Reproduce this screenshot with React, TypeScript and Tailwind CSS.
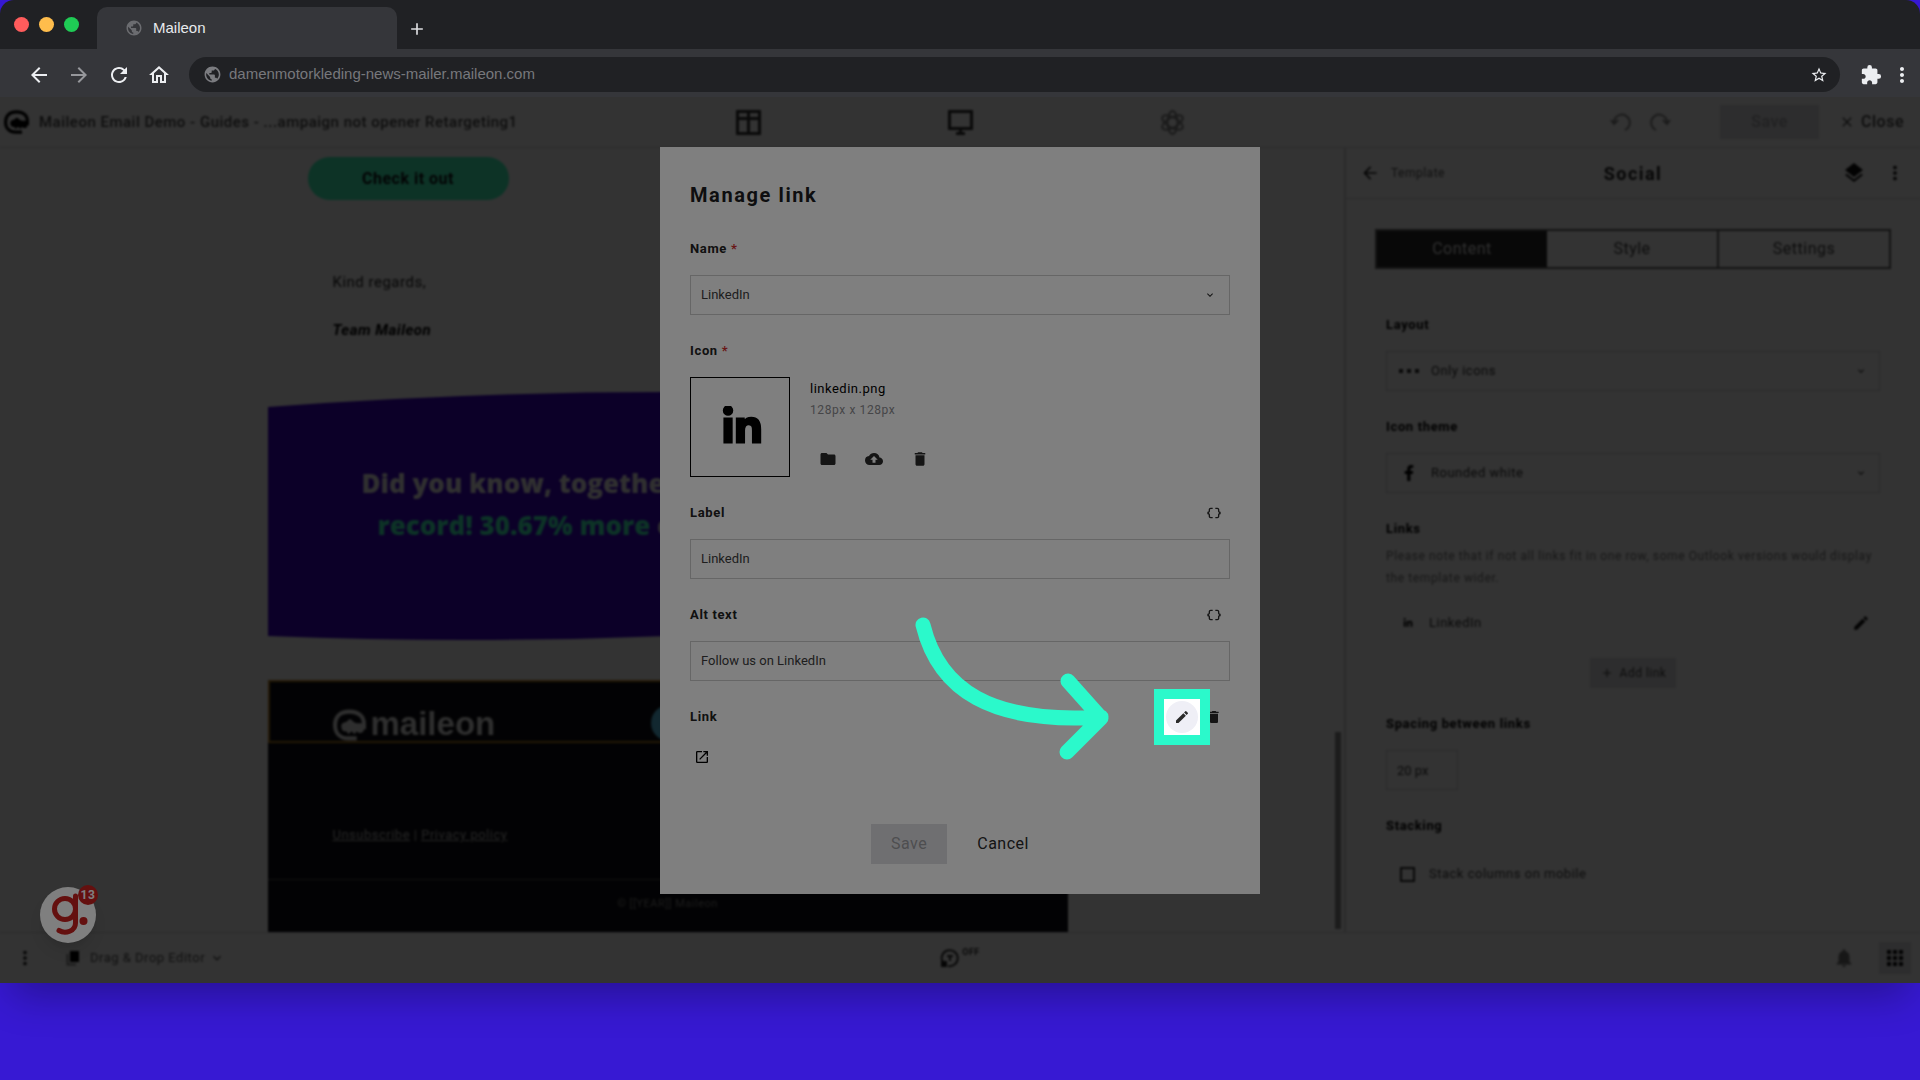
import type { ReactNode } from "react";
import { FaFacebookF, FaLinkedinIn } from "react-icons/fa";
import {
  MdAdd,
  MdApps,
  MdArrowBack,
  MdArrowForward,
  MdClose,
  MdCloudUpload,
  MdDataObject,
  MdDelete,
  MdEdit,
  MdExtension,
  MdFolder,
  MdKeyboardArrowDown,
  MdLayers,
  MdMoreVert,
  MdNotifications,
  MdOpenInNew,
  MdOutlineHome,
  MdPublic,
  MdRefresh,
  MdStarBorder,
} from "react-icons/md";

const AtLogo = ({ className }: { className: string }) => (
  <svg viewBox="0 0 32 30" className={className} fill="none" aria-hidden="true">
    <path d="M23 28H15C7 28 2 23 2 15S7 2 16 2s14 5 14 12v5" stroke="currentColor" strokeWidth="4" />
    <path
      d="M8 16c0-4 4-3 6-5s3-2 5 0 4 3 11 2v6c0 4-5 5-7 2l-2 3-3-3-3 3-2-3c-3 1-5-1-5-5z"
      fill="currentColor"
    />
  </svg>
);

const BrowserChrome = () => (
  <header className="bg-[#202124] font-['Liberation_Sans',sans-serif]">
    <div className="flex h-[49px] items-end">
      <div className="flex h-full w-[97px] items-center gap-2.5 pl-[14px]">
        <span className="h-[15px] w-[15px] rounded-full bg-[#ff5c5c]"></span>
        <span className="h-[15px] w-[15px] rounded-full bg-[#ffbd4c]"></span>
        <span className="h-[15px] w-[15px] rounded-full bg-[#1fcb55]"></span>
      </div>
      <div className="flex h-[42px] w-[300px] items-center gap-2.5 rounded-t-[10px] bg-[#35363a] pl-7 text-[15px] text-[#e8eaed]">
        <MdPublic className="h-[18px] w-[18px] text-[#6b6c70]" />
        Maileon
      </div>
      <button aria-label="New tab" className="flex h-10 w-10 items-center justify-center text-[#dcdde0]">
        <MdAdd className="h-5 w-5" />
      </button>
    </div>
    <div className="flex h-12 items-center bg-[#35363a] pt-[3px] text-[#eceef1]">
      <nav className="flex items-center gap-4 pl-[27px]">
        <button aria-label="Back"><MdArrowBack className="h-6 w-6" /></button>
        <button aria-label="Forward" className="text-[#96979b]"><MdArrowForward className="h-6 w-6" /></button>
        <button aria-label="Reload"><MdRefresh className="h-6 w-6" /></button>
        <button aria-label="Home"><MdOutlineHome className="h-6 w-6" /></button>
      </nav>
      <div className="ml-[18px] flex h-[35px] flex-1 items-center gap-[7px] rounded-full bg-[#202124] pl-3.5 pr-3">
        <MdPublic className="h-[19px] w-[19px] text-[#7b7c80]" />
        <input
          aria-label="Address"
          className="flex-1 bg-transparent text-[15px] text-[#77787c] outline-none"
          defaultValue="damenmotorkleding-news-mailer.maileon.com"
        />
        <button aria-label="Bookmark"><MdStarBorder className="h-[18px] w-[18px]" /></button>
      </div>
      <button aria-label="Extensions" className="ml-5"><MdExtension className="h-[22px] w-[22px]" /></button>
      <button aria-label="Menu" className="ml-2 mr-1.5"><MdMoreVert className="h-6 w-6" /></button>
    </div>
  </header>
);

const EditorHeader = () => (
  <div className="grid h-[51px] grid-cols-[1fr_auto_1fr] items-center border-b border-[#d8d8dc]">
    <div className="flex items-center gap-2.5 pl-1 text-[15px] font-medium text-[#484848]">
      <AtLogo className="h-6 w-[25px] text-black" />
      Maileon Email Demo - Guides - ...ampaign not opener Retargeting1
    </div>
    <div className="flex text-[#333]">
      <button aria-label="Layout" className="flex w-[212px] justify-center">
        <svg viewBox="0 0 25 25" className="h-[25px] w-[25px]" fill="none" stroke="currentColor" strokeWidth="3">
          <path d="M1.500 1.500h22v22h-22zM1.500 8.500h22M12.500 1.500v22" />
        </svg>
      </button>
      <button aria-label="Desktop preview" className="flex w-[212px] justify-center">
        <svg viewBox="0 0 25 25" className="h-[25px] w-[25px]">
          <path d="M1.500 1.500h22v17h-22z" fill="none" stroke="currentColor" strokeWidth="3" />
          <path d="M11 19h3v3h3v3H8v-3h3z" fill="currentColor" />
        </svg>
      </button>
      <button aria-label="Effects" className="flex w-[212px] justify-center text-[#888]">
        <svg viewBox="0 0 25 25" className="h-[25px] w-[25px]" fill="none" stroke="currentColor" strokeWidth="2">
          <ellipse cx="12.500" cy="12.500" rx="5" ry="11.500" />
          <ellipse cx="12.500" cy="12.500" rx="5" ry="11.500" transform="rotate(60 12.500 12.500)" />
          <ellipse cx="12.500" cy="12.500" rx="5" ry="11.500" transform="rotate(120 12.500 12.500)" />
        </svg>
      </button>
    </div>
    <div className="flex items-center justify-end pr-4 text-[16px] font-medium">
      <button aria-label="Undo" className="mr-[17px] text-[#8a8a8a]">
        <svg viewBox="0 0 22 20" className="h-5 w-[22px]" fill="none" stroke="currentColor" strokeWidth="2">
          <path d="M4 12a8 8 0 1 1 11 6M1 8l3 4 4-4" />
        </svg>
      </button>
      <button aria-label="Redo" className="mr-[49px] text-[#8a8a8a]">
        <svg viewBox="0 0 22 20" className="h-5 w-[22px]" fill="none" stroke="currentColor" strokeWidth="2">
          <path d="M18 12a8 8 0 1 0-11 6M21 8l-3 4-4-4" />
        </svg>
      </button>
      <button className="mr-5 h-[34px] w-[99px] bg-[#e2e2e6] text-[#a5a5aa]">Save</button>
      <button className="flex items-center gap-1.5 text-[#484848]">
        <MdClose className="h-4 w-4" />
        Close
      </button>
    </div>
  </div>
);

const EmailCanvas = () => (
  <main className="flex min-w-0 flex-1">
    <div className="flex flex-1 justify-center">
      <div className="flex w-[800px] flex-col">
        <div className="flex flex-col pl-10 pt-[9px]">
          <button className="h-[43px] w-[201px] rounded-full bg-[#41ffc0] text-[16px] font-bold text-[#101014]">
            Check it out
          </button>
        </div>
        <div className="flex flex-col gap-6 pb-[50px] pl-[65px] pt-[70px] text-[15px] leading-6 text-[#222]">
          <p>Kind regards,</p>
          <p className="font-bold italic text-black">Team Maileon</p>
        </div>
        <div className="relative h-[248px]">
          <svg viewBox="0 0 800 248" preserveAspectRatio="none" className="absolute inset-0 h-full w-full">
            <path d="M0 15Q200 0 400 0T800 15V240Q600 236 400 244Q200 252 0 244z" fill="#3d00c8" />
          </svg>
          <p className="relative pl-[94px] pt-[70px] font-['Open_Sans',sans-serif] text-[26px] font-extrabold leading-[42px] tracking-normal text-[#f0f0f0]">
            Did you know, together
            <br />
            <span className="ml-4 text-[#41ffc0]">record! 30.67% more</span> o
          </p>
        </div>
        <div className="mt-10 flex flex-1 flex-col bg-[#0d0d14] text-[#bbb]">
          <div className="flex h-[63px] items-end gap-[5px] border-2 border-[#b07c20] pl-[63px]">
            <AtLogo className="h-8 w-[33px] text-[#e8e8e8]" />
            <span className="font-['Liberation_Sans',sans-serif] text-[33px] font-bold leading-[34px] tracking-normal text-[#e8e8e8]">
              maileon
            </span>
            <span className="ml-[151px] h-9 w-9 rounded-full bg-[#5ac8f0]"></span>
          </div>
          <p className="border-b border-[#55555c] pb-8 pl-[65px] pt-20 text-[13px] leading-6">
            <a href="#" className="underline">Unsubscribe</a> | <a href="#" className="underline">Privacy policy</a>
          </p>
          <p className="pt-3 text-center text-[11px] leading-6 text-[#888]">© [[YEAR]] Maileon</p>
        </div>
      </div>
    </div>
    <div className="flex w-[9px] items-end pb-[3px]">
      <span className="h-[197px] w-1.5 bg-[#909090]"></span>
    </div>
  </main>
);

const SidebarLabel = ({ children }: { children: ReactNode }) => (
  <h3 className="flex h-8 items-center text-[13px] font-bold tracking-wider text-black">{children}</h3>
);

const SidebarSelect = ({ label, value, icon }: { label: string; value: string; icon: ReactNode }) => (
  <label className="flex flex-col">
    <SidebarLabel>{label}</SidebarLabel>
    <span className="mb-5 mt-2.5 flex h-10 items-center border border-[#d4d4d8] px-3 text-[13px] text-[#333]">
      <span className="flex w-8">{icon}</span>
      <select className="h-full flex-1 appearance-none bg-transparent outline-none">
        <option>{value}</option>
      </select>
      <MdKeyboardArrowDown className="h-3 w-3" />
    </span>
  </label>
);

const Sidebar = () => (
  <aside className="flex w-[576px] shrink-0 flex-col border-l-2 border-[#d4d4d8]">
    <div className="grid h-[51px] grid-cols-[1fr_auto_1fr] items-center border-b border-[#d4d4d8] pl-3.5 pr-3.5">
      <button className="flex items-center gap-[11px] text-[12px] text-[#555]">
        <MdArrowBack className="h-5 w-5 text-[#222]" />
        Template
      </button>
      <h2 className="text-[18px] font-bold tracking-[0.08em] text-[#222]">Social</h2>
      <div className="flex items-center justify-end gap-[18px] text-[#111]">
        <button aria-label="Layers"><MdLayers className="h-6 w-6" /></button>
        <button aria-label="More"><MdMoreVert className="h-[22px] w-[22px]" /></button>
      </div>
    </div>
    <div className="mx-[29px] mt-[30px] flex h-10 border-2 border-[#666] text-[16px] text-[#444]">
      <button className="flex-1 bg-[#2a2a2a] text-[#e8e8e8]">Content</button>
      <button className="flex-1 border-r-2 border-[#666]">Style</button>
      <button className="flex-1">Settings</button>
    </div>
    <div className="flex flex-col px-10 pt-10">
      <SidebarSelect
        label="Layout"
        value="Only icons"
        icon={
          <svg viewBox="0 0 20 4" className="h-1 w-5" fill="currentColor">
            <path d="M0 0h4v4H0zM8 0h4v4H8zM16 0h4v4h-4z" />
          </svg>
        }
      />
      <SidebarSelect
        label="Icon theme"
        value="Rounded white"
        icon={<FaFacebookF className="ml-0.5 h-4 w-4 text-black" />}
      />
      <SidebarLabel>Links</SidebarLabel>
      <p className="text-[12px] leading-[22px] tracking-wider text-[#777]">
        Please note that if not all links fit in one row, some Outlook versions would display the template wider.
      </p>
      <div className="mb-[15px] mt-3.5 flex h-10 items-center pl-[17px] pr-2.5 text-[13px] text-[#333]">
        <FaLinkedinIn className="h-2.5 w-2.5 text-black" />
        <span className="ml-4 flex-1">LinkedIn</span>
        <button aria-label="Edit LinkedIn"><MdEdit className="h-[18px] w-[18px] text-[#111]" /></button>
      </div>
      <button className="mb-5 flex h-[30px] w-[86px] items-center justify-center gap-1.5 self-center bg-[#e2e2e6] text-[12px] text-[#444]">
        <MdAdd className="h-3.5 w-3.5" />
        Add link
      </button>
      <label className="flex flex-col">
        <SidebarLabel>Spacing between links</SidebarLabel>
        <input
          className="mb-5 mt-2.5 h-10 w-[72px] border border-[#d4d4d8] px-2.5 text-[13px] tracking-normal text-[#333]"
          defaultValue="20 px"
        />
      </label>
      <SidebarLabel>Stacking</SidebarLabel>
      <label className="mt-3 flex h-10 items-center gap-3.5 pl-3.5 text-[13px] text-[#444]">
        <input type="checkbox" className="h-[15px] w-[15px] appearance-none border-2 border-[#333]" />
        Stack columns on mobile
      </label>
    </div>
  </aside>
);

const EditorFooter = () => (
  <footer className="grid h-[51px] grid-cols-[1fr_auto_1fr] items-center border-t border-[#d8d8dc] text-[#555]">
    <div className="flex items-center pl-3.5">
      <button aria-label="Options"><MdMoreVert className="h-[22px] w-[22px] text-[#222]" /></button>
      <button className="ml-[30px] flex items-center text-[13px]">
        <svg viewBox="0 0 14 16" className="mr-2.5 h-4 w-3.5">
          <path d="M4 1h9v11H4z" fill="#000" />
          <path d="M1.500 4v10.500H10" fill="none" stroke="#888" strokeWidth="2" />
        </svg>
        Drag &amp; Drop Editor
        <MdKeyboardArrowDown className="ml-1 h-4 w-4" />
      </button>
    </div>
    <button className="flex items-center gap-0.5">
      <svg viewBox="0 0 20 20" className="h-5 w-5" fill="none" stroke="#333" strokeWidth="2">
        <path d="M3 14.500A8 8 0 1 1 8 18" />
        <path d="M7 8h6M10 8v5" />
        <path d="M1 13h6v6H1z" fill="#222" stroke="none" />
      </svg>
      <span className="pb-2.5 text-[9px] font-bold text-[#333]">OFF</span>
    </button>
    <div className="flex items-center justify-end gap-6 pr-[9px]">
      <button aria-label="Notifications"><MdNotifications className="h-[22px] w-[22px] text-[#777]" /></button>
      <button aria-label="Apps" className="flex h-8 w-8 items-center justify-center bg-[#e2e2e6]">
        <MdApps className="h-6 w-6 text-[#111]" />
      </button>
    </div>
  </footer>
);

const FieldLabel = ({ text, htmlFor, required }: { text: string; htmlFor?: string; required?: boolean }) => (
  <label htmlFor={htmlFor} className="flex-1 text-[13px] font-bold tracking-wider text-[#222]">
    {text} {required && <span className="text-[#d32f2f]">*</span>}
  </label>
);

const TextField = ({ id, label, value }: { id: string; label: string; value: string }) => (
  <div className="mb-5">
    <div className="mb-2.5 flex h-8 items-center">
      <FieldLabel text={label} htmlFor={id} />
      <button aria-label="Insert placeholder" className="flex h-8 w-8 items-center justify-center">
        <MdDataObject className="h-4 w-4" />
      </button>
    </div>
    <input
      id={id}
      defaultValue={value}
      className="h-10 w-full border border-[#ccc] px-2.5 pb-0.5 text-[13px] tracking-normal text-[#3c3c3c]"
    />
  </div>
);

// Focus ring around the current step's target; its outer shadow dims the rest of the page.
const Spotlight = () => (
  <span className="pointer-events-none absolute -inset-3 z-10 border-[10px] border-[#2bf9cb] shadow-[0_0_0_2000px_rgba(0,0,0,0.5)]">
    <svg viewBox="0 0 204 152" className="absolute -top-[87px] right-[85px] h-[152px] w-[204px] max-w-none" fill="none">
      <path
        d="M12 13C28 78 80 112 190 105M157 69L190 106L156 140"
        stroke="#2bf9cb"
        strokeWidth="15"
        strokeLinecap="round"
        strokeLinejoin="round"
      />
    </svg>
  </span>
);

const ManageLinkDialog = () => (
  <div role="dialog" aria-labelledby="dialog-title" className="w-[600px] bg-white p-[30px] text-[#2a2a2a]">
    <h1 id="dialog-title" className="mb-5 text-[20px] font-bold leading-9 tracking-[0.08em] text-[#1c1c20]">
      Manage link
    </h1>

    <div className="mb-2.5 flex h-8 items-center">
      <FieldLabel text="Name" htmlFor="name" required />
    </div>
    <div className="mb-5 flex h-10 items-center border border-[#ccc] pr-[13px]">
      <select
        id="name"
        className="h-full flex-1 appearance-none bg-transparent px-2.5 text-[13px] tracking-normal text-[#3c3c3c] outline-none"
      >
        <option>LinkedIn</option>
      </select>
      <MdKeyboardArrowDown className="h-3 w-3" />
    </div>

    <div className="mb-2.5 flex h-8 items-center">
      <FieldLabel text="Icon" required />
    </div>
    <div className="mb-5 flex gap-5">
      <div className="flex h-[100px] w-[100px] items-center justify-center border border-black pl-1">
        <FaLinkedinIn className="h-[42px] w-[42px] stroke-black stroke-[20] text-black" />
      </div>
      <div className="flex flex-col">
        <p className="text-[13px] leading-6 text-black">linkedin.png</p>
        <p className="text-[12px] leading-[18px] tracking-wider text-[#8c8c90]">128px x 128px</p>
        <div className="mt-[22px] flex gap-2.5">
          <button aria-label="Choose file" className="flex h-9 w-9 items-center justify-center">
            <MdFolder className="h-[18px] w-[18px]" />
          </button>
          <button aria-label="Upload" className="flex h-9 w-9 items-center justify-center">
            <MdCloudUpload className="h-[18px] w-[18px]" />
          </button>
          <button aria-label="Delete icon" className="flex h-9 w-9 items-center justify-center">
            <MdDelete className="h-[18px] w-[18px]" />
          </button>
        </div>
      </div>
    </div>

    <TextField id="label" label="Label" value="LinkedIn" />
    <TextField id="alt" label="Alt text" value="Follow us on LinkedIn" />

    <div className="mb-2.5 flex h-8 items-center">
      <FieldLabel text="Link" />
      <button
        aria-label="Edit link"
        className="relative flex h-8 w-8 items-center justify-center rounded-full bg-[#efeff6]"
      >
        <MdEdit className="h-4 w-4" />
        <Spotlight />
      </button>
      <button aria-label="Delete link" className="flex h-8 w-8 items-center justify-center">
        <MdDelete className="h-4 w-4" />
      </button>
    </div>
    <a href="#" aria-label="Open link" className="flex h-7 items-center pl-1">
      <MdOpenInNew className="h-4 w-4 text-black" />
    </a>

    <div className="mt-[53px] flex justify-center gap-2.5 text-[16px]">
      <button className="h-10 bg-[#dfdfe3] px-5 text-[#9c9ca0]">Save</button>
      <button className="h-10 px-5">Cancel</button>
    </div>
  </div>
);

const GuideBadge = () => (
  <button
    aria-label="Guides"
    className="absolute bottom-10 left-10 flex h-14 w-14 items-center justify-center rounded-full bg-white shadow-lg"
  >
    <svg viewBox="0 0 56 56" className="h-14 w-14" fill="none" stroke="#c8201e" strokeWidth="5">
      <circle cx="25" cy="22" r="10.500" />
      <path d="M35.500 9v27c0 8-10 11.500-16.500 7.500" strokeLinecap="round" />
      <circle cx="43.500" cy="34" r="4" fill="#c8201e" stroke="none" />
    </svg>
    <span className="absolute -right-0.5 -top-0.5 flex h-5 w-5 items-center justify-center rounded-full bg-[#c8201e] text-[12px] font-bold text-white">
      13
    </span>
  </button>
);

const App = () => {
  return (
    <div className="flex min-h-screen flex-col bg-[#3719d3] pb-[97px]">
      <div className="flex flex-1 flex-col overflow-hidden rounded-t-[14px] shadow-[0_24px_40px_-12px_rgba(0,0,0,0.3)]">
        <BrowserChrome />
        <div className="relative flex flex-1 flex-col overflow-hidden bg-white font-[Roboto,sans-serif] tracking-[0.5px]">
          <div className="flex flex-1 flex-col bg-white blur-[1px]">
            <EditorHeader />
            <div className="flex flex-1">
              <EmailCanvas />
              <Sidebar />
            </div>
            <EditorFooter />
          </div>
          <div className="absolute inset-0 flex items-start justify-center bg-black/60 pt-[50px]">
            <GuideBadge />
            <ManageLinkDialog />
          </div>
        </div>
      </div>
    </div>
  );
};

export default App;
